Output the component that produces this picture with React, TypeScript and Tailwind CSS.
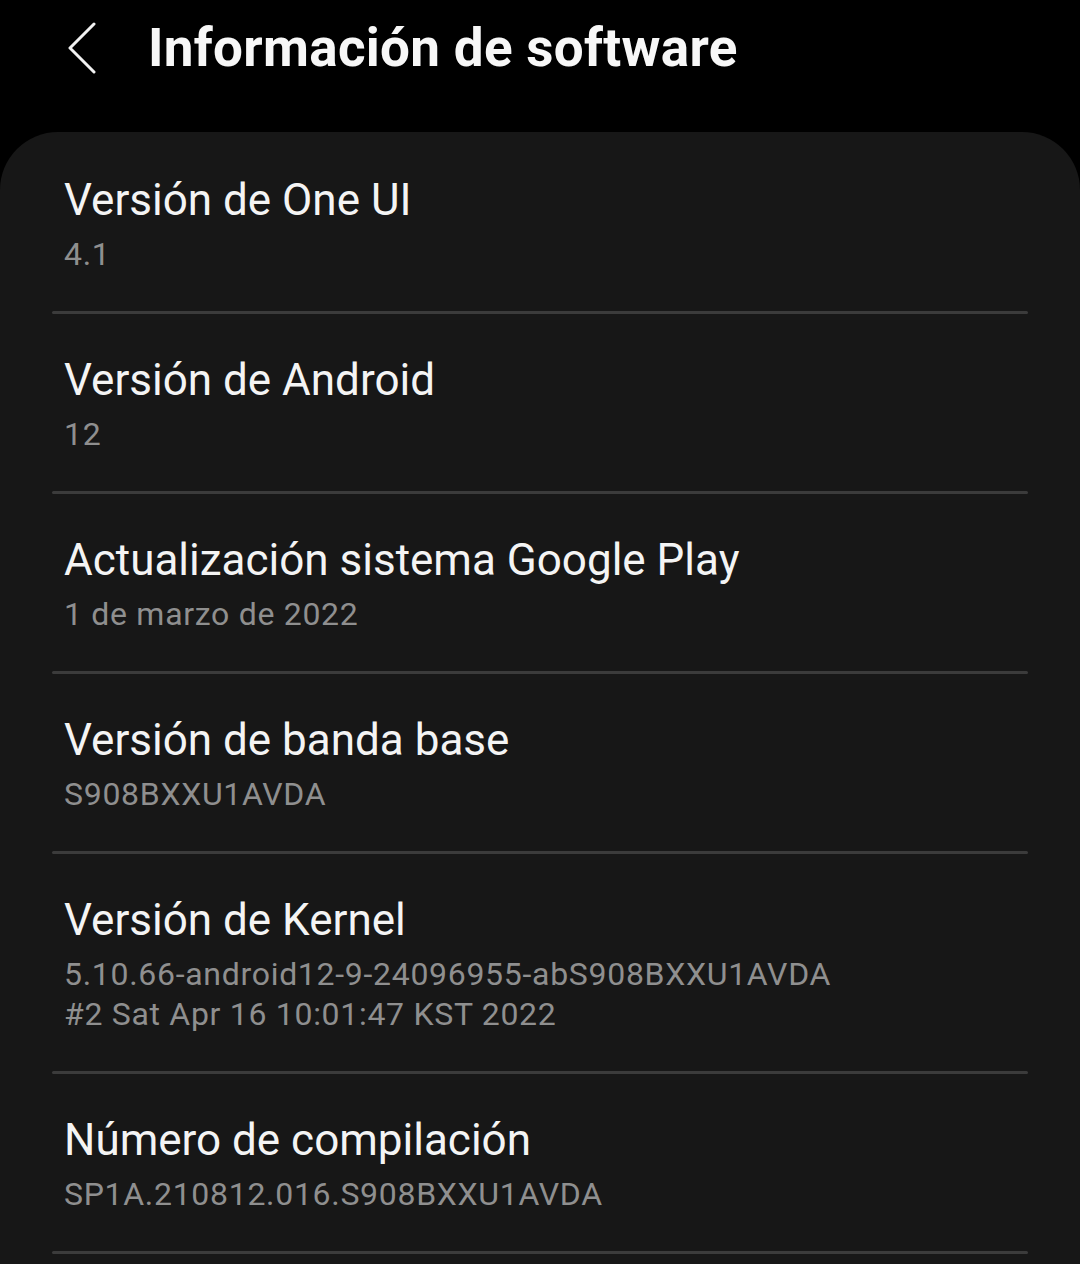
import React from "react";

type Item = { title: string; lines: string[] };

const items: Item[] = [
  { title: "Versión de One UI", lines: ["4.1"] },
  { title: "Versión de Android", lines: ["12"] },
  { title: "Actualización sistema Google Play", lines: ["1 de marzo de 2022"] },
  { title: "Versión de banda base", lines: ["S908BXXU1AVDA"] },
  {
    title: "Versión de Kernel",
    lines: ["5.10.66-android12-9-24096955-abS908BXXU1AVDA", "#2 Sat Apr 16 10:01:47 KST 2022"],
  },
  { title: "Número de compilación", lines: ["SP1A.210812.016.S908BXXU1AVDA"] },
];

export default function App() {
  return (
    <div
      className="w-[1080px] h-[1264px] bg-black overflow-hidden flex flex-col"
      style={{ fontFamily: "Roboto, 'Noto Sans', sans-serif" }}
    >
      <header className="h-[132px] shrink-0 flex items-start pt-[18px] pl-[66px]">
        <svg width="30" height="60" viewBox="0 0 30 60" className="shrink-0 mt-[1px]">
          <path d="M28 5 L4 29 L28 53" fill="none" stroke="#f2f2f2" strokeWidth="3" strokeLinecap="round" strokeLinejoin="round" />
        </svg>
        <h1 className="ml-[52px] text-[53px] leading-[60px] font-bold text-[#f7f7f7] tracking-[0.3px]">
          Información de software
        </h1>
      </header>
      <main className="flex-1 bg-[#171717] rounded-t-[58px] pt-[2px]">
        {items.map((it) => (
          <section key={it.title} className="flex flex-col">
            <div className="pt-[40px] pb-[37px] px-[64px]">
              <div className="text-[44px] leading-[52px] text-[#f4f4f4]">{it.title}</div>
              <div className="mt-[8px] flex flex-col">
                {it.lines.map((l) => (
                  <div key={l} className="text-[32px] leading-[40px] text-[#8f8f8f] tracking-[0.7px]">
                    {l}
                  </div>
                ))}
              </div>
            </div>
            <div className="mx-[52px] h-[3px] bg-[#3b3b3b] rounded-full" />
          </section>
        ))}
      </main>
    </div>
  );
}
